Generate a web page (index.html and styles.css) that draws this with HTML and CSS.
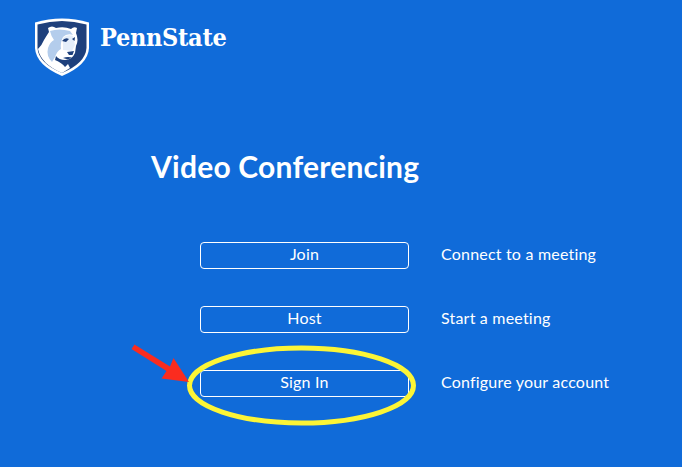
FILE: index.html
```html
<!DOCTYPE html>
<html>
<head>
    <meta name="viewport" content="width=device-width, initial-scale=1.0">
    <link rel="stylesheet" href="styles.css">
</head>
<body>
    <div class="page">
        <div class="brand">
            <svg class="shield" viewBox="0 0 54 58" width="54" height="58">
                <path fill="#fff" d="M0 4.5 Q27 -3.5 54 4.5 V30 Q53 47 27 58 Q1 47 0 30 Z"/>
                <path fill="#1e407c" d="M2.5 6.5 Q27 -.5 51.5 6.5 V30 Q50.5 45 27 55 Q3.5 45 2.5 30 Z"/>
                <path fill="#fff" d="M3 31 Q7 27 9 22 Q12 17 14 14 L13 10 Q17 7 21 10 Q29 8 36 11 Q39 8 42 10 L41 15 Q44 22 41 28 L40 35 Q37 42 30 42 Q24 42 21 38 L20 42 Q27 45 30 49 L33 46 L35 50 L27 55 Q6 46 3 31 Z"/>
                <path fill="#b4cdec" d="M15 13 Q24 10 35 13 L38 17 Q32 15 28 19 Q25 25 26 31 Q22 33 20 39 L17 44 Q11 38 13 30 Q15 24 19 22 Q16 18 15 13 Z"/>
                <path fill="#e4eefa" d="M28 20 Q32 16 38 18 L40 27 L37 33 L28 32 Z"/>
                <path fill="#1e407c" d="M27 23 Q30 19 34 21 L31 24 Z M37 21 L40 19 L39.5 23 Z M32 34 L39 33 L37.5 37 L34 37 Z M28 40 Q32 38.5 37 39.5 L33 41.5 Z"/>
            </svg>
            <span class="wordmark">PennState</span>
        </div>
        <h1 class="title">Video Conferencing</h1>
        <div class="actions">
            <div class="action">
                <button class="btn">Join</button>
                <span class="hint">Connect to a meeting</span>
            </div>
            <div class="action">
                <button class="btn">Host</button>
                <span class="hint">Start a meeting</span>
            </div>
            <div class="action">
                <button class="btn">Sign In</button>
                <span class="hint">Configure your account</span>
            </div>
        </div>
        <svg class="markup" viewBox="0 0 682 467" width="682" height="467">
            <ellipse cx="301.5" cy="385.5" rx="112" ry="37.5" fill="none" stroke="#fcf536" stroke-width="5"/>
            <path fill="#fb2c1f" d="M134.5 344.5 L170 366.5 L173.5 358 L189 382 L161.5 378.5 L166.5 371 L131.5 349 Z"/>
        </svg>
    </div>
</body>
</html>
```
FILE: styles.css
```css
* {
    margin: 0;
    padding: 0;
    box-sizing: border-box;
}

body {
    background: #106bd9;
    overflow: hidden;
}

.page {
    position: relative;
    width: 682px;
    height: 467px;
    padding: 18px 0 0 35px;
    color: #fff;
    font-family: 'Lato', sans-serif;
}

.brand {
    display: flex;
    align-items: flex-start;
    gap: 11px;
}

.shield {
    display: block;
    flex: none;
}

.wordmark {
    margin-top: 3px;
    font-family: 'DejaVu Serif', serif;
    font-size: 25px;
    line-height: 34px;
    font-weight: 700;
    font-stretch: condensed;
    letter-spacing: -0.3px;
}

.title {
    margin: 72px 0 0 116px;
    font-size: 30px;
    line-height: 36px;
    font-weight: 700;
    letter-spacing: 0.22px;
}

.actions {
    display: flex;
    flex-direction: column;
    gap: 37px;
    margin: 58px 0 0 165px;
}

.action {
    display: flex;
    align-items: center;
    gap: 32px;
}

.btn {
    width: 209px;
    height: 27px;
    padding-bottom: 5px;
    background: none;
    border: 1px solid #fff;
    border-radius: 4px;
    color: #fff;
    font-family: 'Lato', sans-serif;
    font-size: 16px;
    letter-spacing: 0.2px;
}

.hint {
    margin-top: -5px;
    font-size: 16px;
    letter-spacing: 0.2px;
}

.markup {
    position: absolute;
    top: 0;
    left: 0;
    pointer-events: none;
}
```
